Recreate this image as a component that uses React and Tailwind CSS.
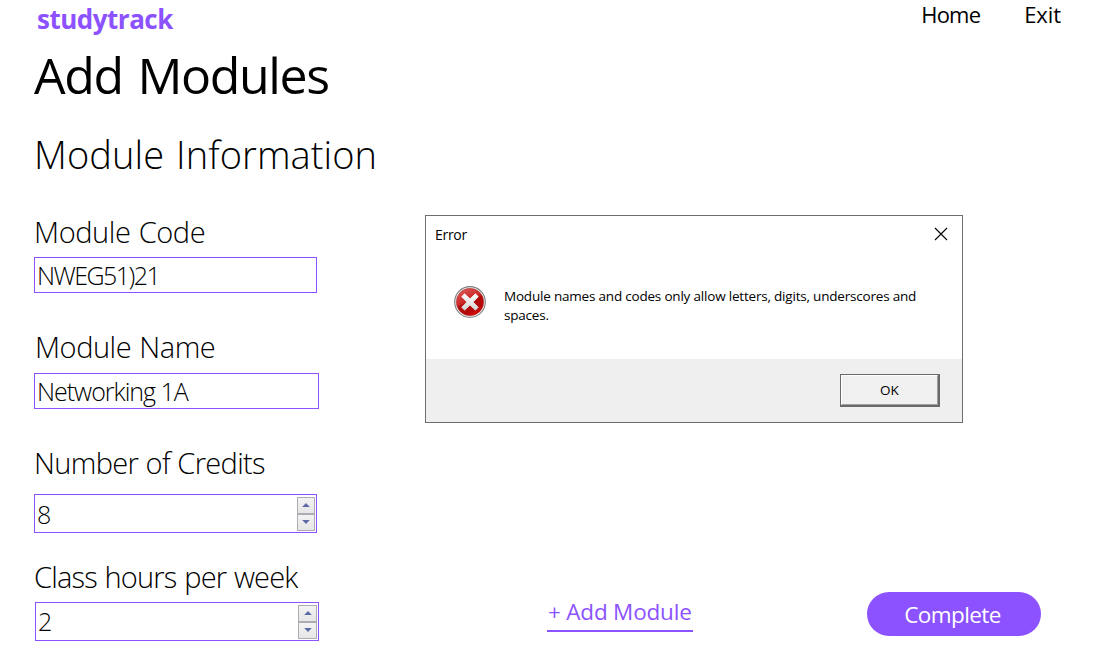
function Spinner({ className }) {
  return (
    <span className={`flex flex-col ${className}`}>
      <button className="flex h-[17px] items-center justify-center border border-[#acacb2] bg-linear-to-b from-[#f3f3f3] to-[#e6e6e6]">
        <svg width="8" height="4" viewBox="0 0 8 4"><path d="M0.2 4 4 0l3.8 4z" fill="#5b6aa5" /></svg>
      </button>
      <button className="flex h-[17px] items-center justify-center border border-[#acacb2] bg-linear-to-b from-[#f3f3f3] to-[#e6e6e6]">
        <svg width="8" height="4" viewBox="0 0 8 4"><path d="M0.2 0h7.6L4 4z" fill="#5b6aa5" /></svg>
      </button>
    </span>
  );
}

function Label({ className, children }) {
  return <label className={`block text-[29px] leading-[40px] font-light whitespace-nowrap ${className}`}>{children}</label>;
}

function ErrorIcon() {
  return (
    <svg className="size-8 shrink-0" viewBox="0 0 32 32">
      <defs>
        <linearGradient id="ring" x1="0" y1="0" x2="0" y2="1">
          <stop offset="0" stopColor="#7d7d7d" />
          <stop offset="1" stopColor="#8e8e8e" />
        </linearGradient>
        <linearGradient id="red" x1="0.2" y1="0" x2="0.7" y2="1">
          <stop offset="0" stopColor="#dc5a58" />
          <stop offset="0.45" stopColor="#c92724" />
          <stop offset="0.5" stopColor="#b00c0c" />
          <stop offset="0.8" stopColor="#b50808" />
          <stop offset="1" stopColor="#e01010" />
        </linearGradient>
        <linearGradient id="cross" x1="0" y1="0" x2="0" y2="1">
          <stop offset="0" stopColor="#ffffff" />
          <stop offset="1" stopColor="#d4d4d4" />
        </linearGradient>
      </defs>
      <circle cx="16" cy="16" r="15.3" fill="#f4f4f4" stroke="url(#ring)" strokeWidth="1.2" />
      <circle cx="16" cy="16" r="13.7" fill="url(#red)" stroke="#a33" strokeWidth="0.5" />
      <path
        d="M10.6 7.8 16 12.9l5.4-5.1 2.9 2.9L19.1 16l5.2 5.2-2.9 3L16 19.1l-5.4 5.1-2.9-3L12.9 16l-5.2-5.3z"
        fill="url(#cross)"
        strokeLinejoin="round"
        stroke="url(#cross)"
        strokeWidth="0.8"
      />
    </svg>
  );
}

function ErrorDialog() {
  return (
    <div role="dialog" className="absolute top-[215px] left-[425px] flex h-[208px] w-[538px] flex-col border border-[#6e6e6e] bg-white">
      <div className="flex h-[37px] items-center justify-between pr-[14px] pl-[9px]">
        <span className="text-[14px] leading-5 tracking-[-0.3px]">Error</span>
        <svg className="mb-[2px]" width="14" height="14" viewBox="0 0 14 14">
          <path d="M1 1l12 12M13 1 1 13" stroke="#000" strokeWidth="1.1" />
        </svg>
      </div>
      <div className="flex flex-1 pt-[33px] pl-7">
        <ErrorIcon />
        <p className="ml-[18px] w-[440px] pt-px text-[13.5px] leading-[19px] tracking-[-0.2px]">
          Module names and codes only allow letters, digits, underscores and
          <br />
          spaces.
        </p>
      </div>
      <div className="flex h-[63px] items-center justify-end bg-[#efefef] pr-[22px]">
        <button className="h-[33px] w-[100px] border border-r-2 border-b-2 border-[#696969] bg-[#f0f0f0]">
          <span className="flex h-full items-center justify-center border border-t-white border-r-[#a0a0a0] border-b-[#a0a0a0] border-l-white text-[13.5px]">OK</span>
        </button>
      </div>
    </div>
  );
}

export default function App() {
  return (
    <div className="relative h-[665px] w-[1100px] overflow-hidden bg-white font-['Open_Sans',sans-serif] text-black">
      <header className="flex h-[45px] items-start justify-between pr-[39px] pl-[37px]">
        <div className="pt-px text-[26px] leading-[36px] font-bold tracking-[-0.5px] text-[#8c52ff]">studytrack</div>
        <nav className="flex gap-[44px] text-[22px] leading-[29px]">
          <a className="tracking-[-0.8px]">Home</a>
          <a className="tracking-[-0.1px]">Exit</a>
        </nav>
      </header>
      <main className="flex pl-[34px]">
        <section className="w-[391px] shrink-0">
          <h1 className="text-[50px] leading-[60px] tracking-[-1.35px] [word-spacing:3px] whitespace-nowrap">Add Modules</h1>
          <h2 className="mt-6 text-[38px] leading-[50px] font-light tracking-[0.08px] [word-spacing:2px] whitespace-nowrap">Module Information</h2>

          <Label className="mt-[33px] tracking-[-0.4px] [word-spacing:1px]">Module Code</Label>
          <div className="mt-[5px] flex h-9 w-[283px] items-center border border-[#8c52ff] pt-[2px] pl-[2px] text-[25px] font-light tracking-[-1.55px]">NWEG51)21</div>

          <Label className="mt-[34px] pl-px tracking-[-0.45px] [word-spacing:1px]">Module Name</Label>
          <div className="mt-[6px] flex h-9 w-[285px] items-center border border-[#8c52ff] pt-[2px] pl-[2px] text-[25px] font-light tracking-[-1px]">Networking 1A</div>

          <Label className="mt-[34px] tracking-[-0.66px] [word-spacing:0.5px]">Number of Credits</Label>
          <div className="mt-[11px] flex h-[39px] w-[283px] items-center justify-between border border-[#8c52ff] pr-px pl-[2px] text-[25px] font-light">
            <span className="pt-[3px] tracking-[-1px]">8</span>
            <Spinner className="w-[18px]" />
          </div>

          <Label className="mt-6 tracking-[-0.82px] [word-spacing:1px]">Class hours per week</Label>
          <div className="mt-[5px] ml-px flex h-[39px] w-[284px] items-center justify-between border border-[#8c52ff] pr-px pl-[2px] text-[25px] font-light">
            <span>2</span>
            <Spinner className="w-[19px]" />
          </div>
        </section>
        <section className="flex flex-1 items-end justify-between pr-[59px] pb-[5px] pl-[122px]">
          <button className="mb-[4px] flex h-[38px] w-[146px] items-start border-b-2 border-[#8c52ff] pl-px text-[22.5px] leading-[36px] tracking-[-0.2px] whitespace-nowrap text-[#8c52ff]">
            + Add Module
          </button>
          <button className="h-[44px] w-[174px] rounded-full bg-[#8c52ff] pt-[2px] pr-[3px] text-[22.5px] leading-[42px] tracking-[-0.6px] text-white">Complete</button>
        </section>
      </main>
      <ErrorDialog />
    </div>
  );
}
